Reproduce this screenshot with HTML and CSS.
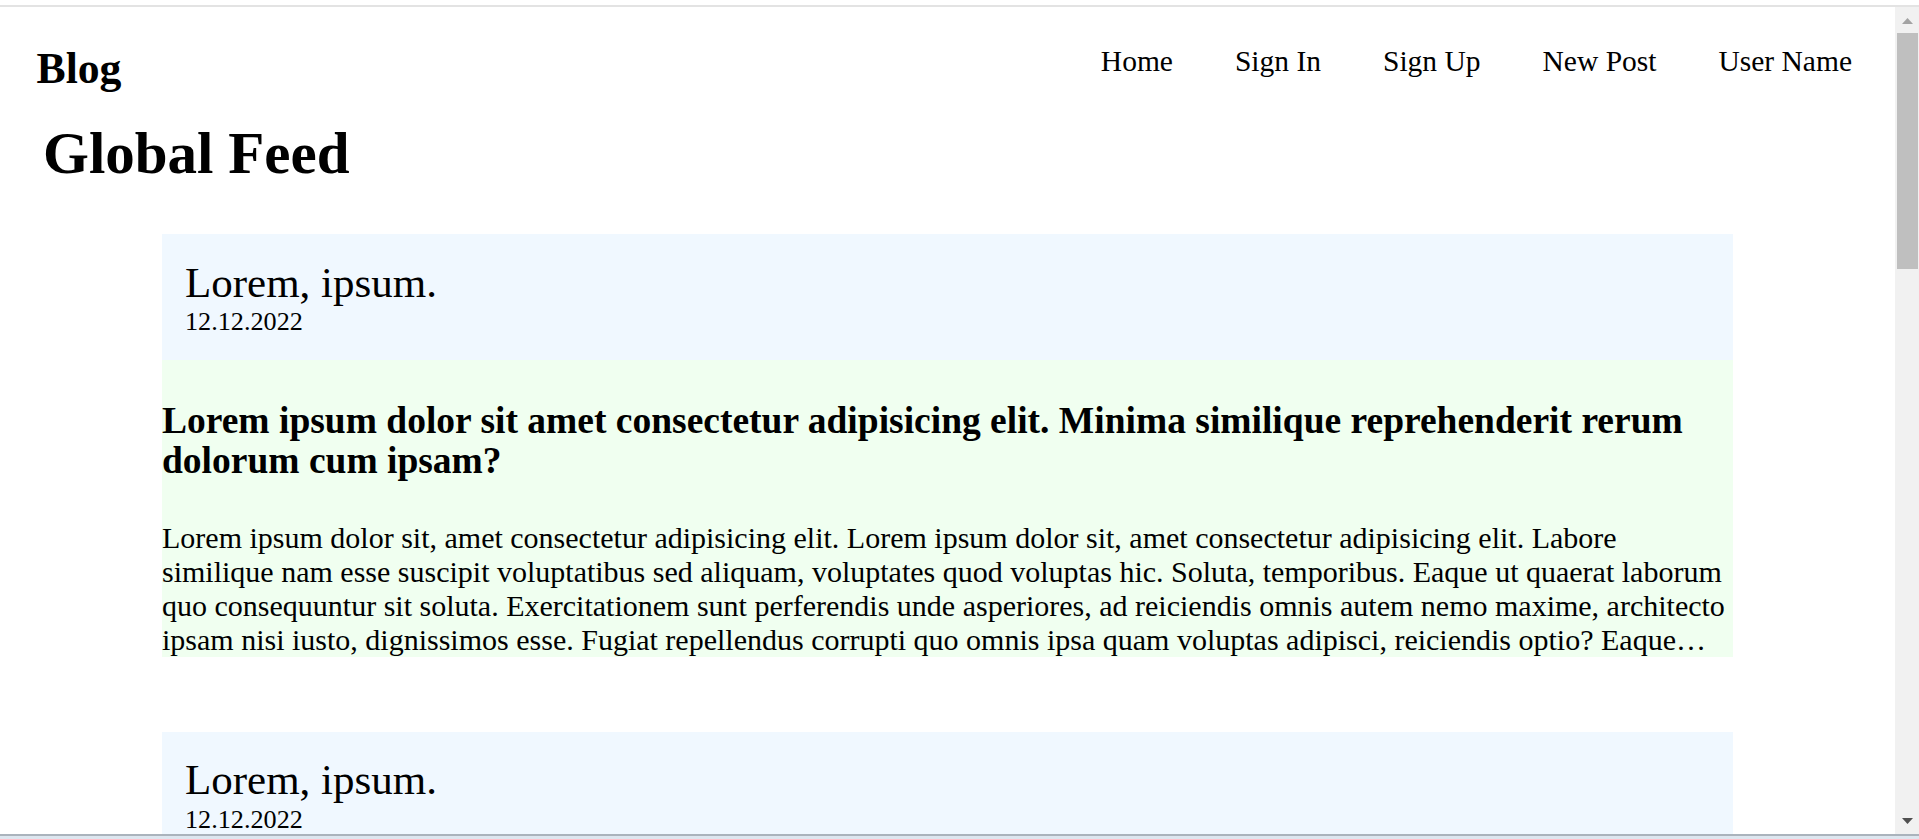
FILE: index.html
```html
<!DOCTYPE html>
<html lang="en">
<head>
<meta charset="utf-8">
<title>Blog</title>
<link rel="stylesheet" href="styles.css">
</head>
<body>
<div class="window">
  <div class="chrome-top"></div>
  <div class="viewport">
    <div class="page">
      <header class="site-header">
        <h2 class="logo">Blog</h2>
        <nav class="nav">
          <a class="nav-link" href="#">Home</a>
          <a class="nav-link" href="#">Sign In</a>
          <a class="nav-link" href="#">Sign Up</a>
          <a class="nav-link" href="#">New Post</a>
          <a class="nav-link" href="#">User Name</a>
        </nav>
      </header>
      <h1 class="feed-title">Global Feed</h1>
      <main class="feed">
        <article class="post">
          <div class="post-head">
            <h2 class="post-author">Lorem, ipsum.</h2>
            <div class="post-date">12.12.2022</div>
          </div>
          <div class="post-body">
            <h3 class="post-title">Lorem ipsum dolor sit amet consectetur adipisicing elit. Minima similique reprehenderit rerum dolorum cum ipsam?</h3>
            <p class="post-text">Lorem ipsum dolor sit, amet consectetur adipisicing elit. Lorem ipsum dolor sit, amet consectetur adipisicing elit. Labore similique nam esse suscipit voluptatibus sed aliquam, voluptates quod voluptas hic. Soluta, temporibus. Eaque ut quaerat laborum quo consequuntur sit soluta. Exercitationem sunt perferendis unde asperiores, ad reiciendis omnis autem nemo maxime, architecto ipsam nisi iusto, dignissimos esse. Fugiat repellendus corrupti quo omnis ipsa quam voluptas adipisci, reiciendis optio? Eaque voluptatibus quibusdam sequi dolores nobis ratione, quisquam accusantium neque eos maiores.</p>
          </div>
        </article>
        <article class="post">
          <div class="post-head">
            <h2 class="post-author">Lorem, ipsum.</h2>
            <div class="post-date">12.12.2022</div>
          </div>
          <div class="post-body">
            <h3 class="post-title">Lorem ipsum dolor sit amet consectetur adipisicing elit. Minima similique reprehenderit rerum dolorum cum ipsam?</h3>
            <p class="post-text">Lorem ipsum dolor sit, amet consectetur adipisicing elit. Lorem ipsum dolor sit, amet consectetur adipisicing elit. Labore similique nam esse suscipit voluptatibus sed aliquam, voluptates quod voluptas hic.</p>
          </div>
        </article>
      </main>
    </div>
    <div class="scrollbar">
      <svg class="sb-arrow sb-up" width="11" height="6" viewBox="0 0 11 6"><polygon points="0,6 11,6 5.5,0" fill="#a3a3a3"/></svg>
      <div class="sb-thumb"></div>
      <div class="sb-fill"></div>
      <svg class="sb-arrow sb-down" width="11" height="6" viewBox="0 0 11 6"><polygon points="0,0 11,0 5.5,6" fill="#505050"/></svg>
    </div>
  </div>
  <div class="chrome-bottom"></div>
</div>
</body>
</html>
```

FILE: styles.css
```css
html, body {
  margin: 0;
  padding: 0;
  height: 100%;
  overflow: hidden;
  background: #ffffff;
}

body {
  font-family: "Liberation Serif", "Times New Roman", serif;
  color: #000000;
  font-size: 30px;
}

.window {
  display: flex;
  flex-direction: column;
  width: 1919px;
  height: 839px;
}

.chrome-top {
  height: 5px;
  background: #ffffff;
  border-bottom: 2px solid #e3e3e3;
  flex: none;
}

.viewport {
  display: flex;
  height: 827px;
  flex: none;
}

.page {
  flex: 1;
  overflow: hidden;
  min-width: 0;
}

.site-header {
  display: flex;
  justify-content: space-between;
  align-items: flex-start;
  padding: 37px 43px 0 36.5px;
}

.logo {
  margin: 0;
  font-size: 43.7px;
  font-weight: bold;
  line-height: 48.4px;
}

.nav {
  display: flex;
  gap: 62px;
  padding-top: 0.6px;
}

.nav-link {
  color: #000000;
  text-decoration: none;
  font-size: 29.5px;
  line-height: 32.7px;
}

.feed-title {
  margin: 28.8px 0 0 43px;
  font-size: 59px;
  font-weight: bold;
  line-height: 65.4px;
}

.feed {
  width: 1571px;
  margin: 47.3px auto 0;
  display: flex;
  flex-direction: column;
  gap: 75px;
}

.post-head {
  background: #f0f8ff;
  padding: 24.7px 23px 21.9px;
}

.post-author {
  margin: 0;
  font-size: 43px;
  font-weight: normal;
  line-height: 47.6px;
}

.post-date {
  font-size: 26.2px;
  line-height: 31.8px;
}

.post-body {
  background: #f0fff0;
  padding-top: 41.5px;
}

.post-title {
  margin: 0 0 40px;
  font-size: 37.5px;
  font-weight: bold;
  line-height: 39.6px;
}

.post-text {
  margin: 0;
  font-size: 30px;
  line-height: 34px;
  display: -webkit-box;
  -webkit-line-clamp: 4;
  -webkit-box-orient: vertical;
  overflow: hidden;
}

.scrollbar {
  width: 24px;
  flex: none;
  background: #f1f1f1;
  display: flex;
  flex-direction: column;
  align-items: center;
}

.sb-arrow {
  display: block;
  flex: none;
}

.sb-up {
  margin-top: 11px;
}

.sb-thumb {
  width: 21px;
  height: 236px;
  margin: 9px 0 0 1px;
  background: #bfbfbf;
  flex: none;
}

.sb-fill {
  flex: 1;
}

.sb-down {
  margin-bottom: 10px;
}

.chrome-bottom {
  height: 3px;
  flex: none;
  border-top: 2px solid #aab3bc;
  background: #dde6ef;
}
```
